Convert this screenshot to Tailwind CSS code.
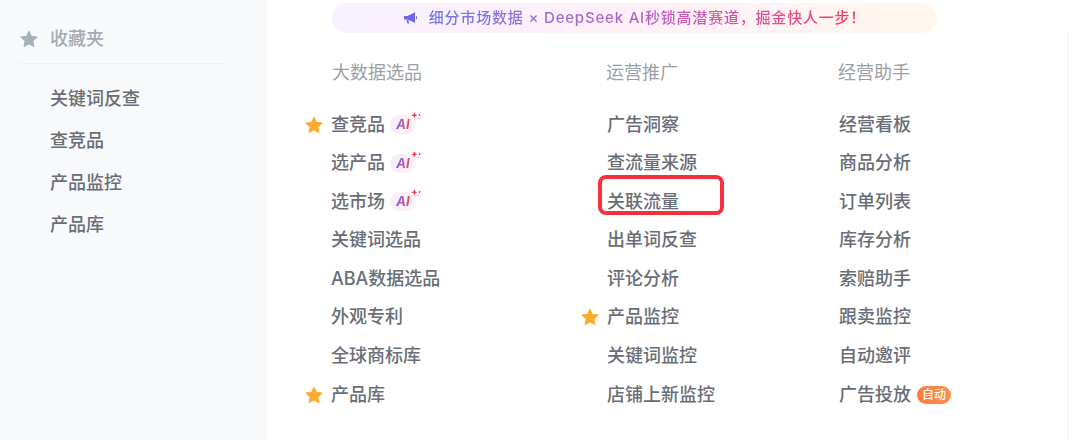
<!DOCTYPE html>
<html lang="zh"><head><meta charset="utf-8">
<script src="https://cdn.jsdelivr.net/npm/@tailwindcss/browser@4"></script>
</head>
<body class="bg-white">
<svg class="hidden"><defs>
<symbol id="star" viewBox="0 0 24 24"><path d="M12 1.6l3.2 6.9 7.4.9-5.5 5.1 1.5 7.5L12 18.3l-6.6 3.7 1.5-7.5L1.4 9.4l7.4-.9z" stroke-linejoin="round" stroke-width="1.4" stroke="currentColor" fill="currentColor"/></symbol>
<symbol id="spark" viewBox="0 0 14 10"><path d="M4 0l1.100 2.600L7.800 3.500 5.100 4.400 4 7.400 2.900 4.400.2 3.500 2.900 2.600z" fill="#f5304f"/><circle cx="10" cy="3.200" r="1.100" fill="#f5304f"/><circle cx="8.500" cy="7" r=".8" fill="#f98aa0"/></symbol>
</defs></svg>
<div class="relative flex w-[1080px] h-[440px] overflow-hidden text-[18px] leading-[26px] font-medium text-[#696e76] [font-family:Inter,'Noto_Sans_CJK_SC',sans-serif]">
  <aside class="w-[267px] shrink-0 bg-[#f8f9fb] pt-[26px] pl-[20px]">
    <div class="flex items-center gap-[12px] text-[#a3aab3] pb-[11px] mr-[42px] border-b border-[#f0f1f3]">
      <svg class="w-[18px] h-[18px] text-[#a6b1bd]"><use href="#star"/></svg>
      <span>收藏夹</span>
    </div>
    <ul class="pl-[30px] pt-[22px] flex flex-col gap-[16px]">
      <li>关键词反查</li><li>查竞品</li><li>产品监控</li><li>产品库</li>
    </ul>
  </aside>
  <main class="flex-1 flex flex-col">
    <div class="mt-[3px] ml-[65px] w-[605px] h-[30px] rounded-full bg-gradient-to-r from-[#f8f1ff] via-[#fff0f8] to-[#fff7ee] flex items-center justify-center gap-[10px] text-[15px] font-medium tracking-[0.8px]">
      <svg class="w-[16px] h-[16px]" viewBox="0 0 16 16"><path d="M1 6h3.500L12 2.200v10.600L4.500 9.500H1z M13 5.500c1.400.6 1.400 3.400 0 4z M3.500 10l1.800 0 .9 3.500H4.500z" fill="#6f63e8"/></svg>
      <span class="bg-gradient-to-r from-[#6a78ee] via-[#b75cc8] to-[#ff2f5c] bg-clip-text text-transparent">细分市场数据 × DeepSeek AI秒锁高潜赛道，掘金快人一步！</span>
    </div>
    <div class="flex mt-[27px] pl-[64px]">
      <section class="w-[275px]">
        <h3 class="text-[#9b9fa6] font-normal pl-[1px] mb-[25.5px]">大数据选品</h3>
        <ul class="flex flex-col gap-[12.6px]">
          <li class="relative flex items-center"><svg class="absolute left-[-26px] w-[18px] h-[18px] text-[#fdab2e]"><use href="#star"/></svg>查竞品<span class="relative ml-[5px] w-[26px] h-[19px] rounded-full bg-gradient-to-r from-[#f4eefd] to-[#fff3f0] text-center text-[13px] leading-[19px] font-bold italic"><span class="bg-gradient-to-r from-[#7c5ce6] to-[#f0356f] bg-clip-text text-transparent">AI</span><svg class="absolute left-[21px] top-[-3px] w-[12px] h-[9px]"><use href="#spark"/></svg></span></li>
          <li class="flex items-center">选产品<span class="relative ml-[5px] w-[26px] h-[19px] rounded-full bg-gradient-to-r from-[#f4eefd] to-[#fff3f0] text-center text-[13px] leading-[19px] font-bold italic"><span class="bg-gradient-to-r from-[#7c5ce6] to-[#f0356f] bg-clip-text text-transparent">AI</span><svg class="absolute left-[21px] top-[-3px] w-[12px] h-[9px]"><use href="#spark"/></svg></span></li>
          <li class="flex items-center">选市场<span class="relative ml-[5px] w-[26px] h-[19px] rounded-full bg-gradient-to-r from-[#f4eefd] to-[#fff3f0] text-center text-[13px] leading-[19px] font-bold italic"><span class="bg-gradient-to-r from-[#7c5ce6] to-[#f0356f] bg-clip-text text-transparent">AI</span><svg class="absolute left-[21px] top-[-3px] w-[12px] h-[9px]"><use href="#spark"/></svg></span></li>
          <li>关键词选品</li>
          <li>ABA数据选品</li>
          <li>外观专利</li>
          <li>全球商标库</li>
          <li class="relative flex items-center"><svg class="absolute left-[-26px] w-[18px] h-[18px] text-[#fdab2e]"><use href="#star"/></svg>产品库</li>
        </ul>
      </section>
      <section class="w-[232px]">
        <h3 class="text-[#9b9fa6] font-normal mb-[25.5px]">运营推广</h3>
        <ul class="flex flex-col gap-[12.6px] pl-[1px]">
          <li>广告洞察</li><li>查流量来源</li><li>关联流量</li><li>出单词反查</li><li>评论分析</li>
          <li class="relative flex items-center"><svg class="absolute left-[-26px] w-[18px] h-[18px] text-[#fdab2e]"><use href="#star"/></svg>产品监控</li>
          <li>关键词监控</li><li>店铺上新监控</li>
        </ul>
      </section>
      <section>
        <h3 class="text-[#9b9fa6] font-normal mb-[25.5px]">经营助手</h3>
        <ul class="flex flex-col gap-[12.6px] pl-[1px]">
          <li>经营看板</li><li>商品分析</li><li>订单列表</li><li>库存分析</li><li>索赔助手</li><li>跟卖监控</li><li>自动邀评</li>
          <li class="flex items-center">广告投放<span class="ml-[6px] w-[34px] h-[18px] rounded-[9px] bg-gradient-to-r from-[#ff7a3c] to-[#fb8f4e] text-white text-center text-[12px] leading-[18px]">自动</span></li>
        </ul>
      </section>
    </div>
  </main>
  <div class="absolute left-[598px] top-[175px] w-[126px] h-[40px] border-4 border-[#f92f3c] rounded-[8px]"></div>
  <div class="absolute left-[1067px] top-[33px] w-[1.500px] h-[407px] bg-[#f6f6f6]"></div>
</div>
</body></html>
